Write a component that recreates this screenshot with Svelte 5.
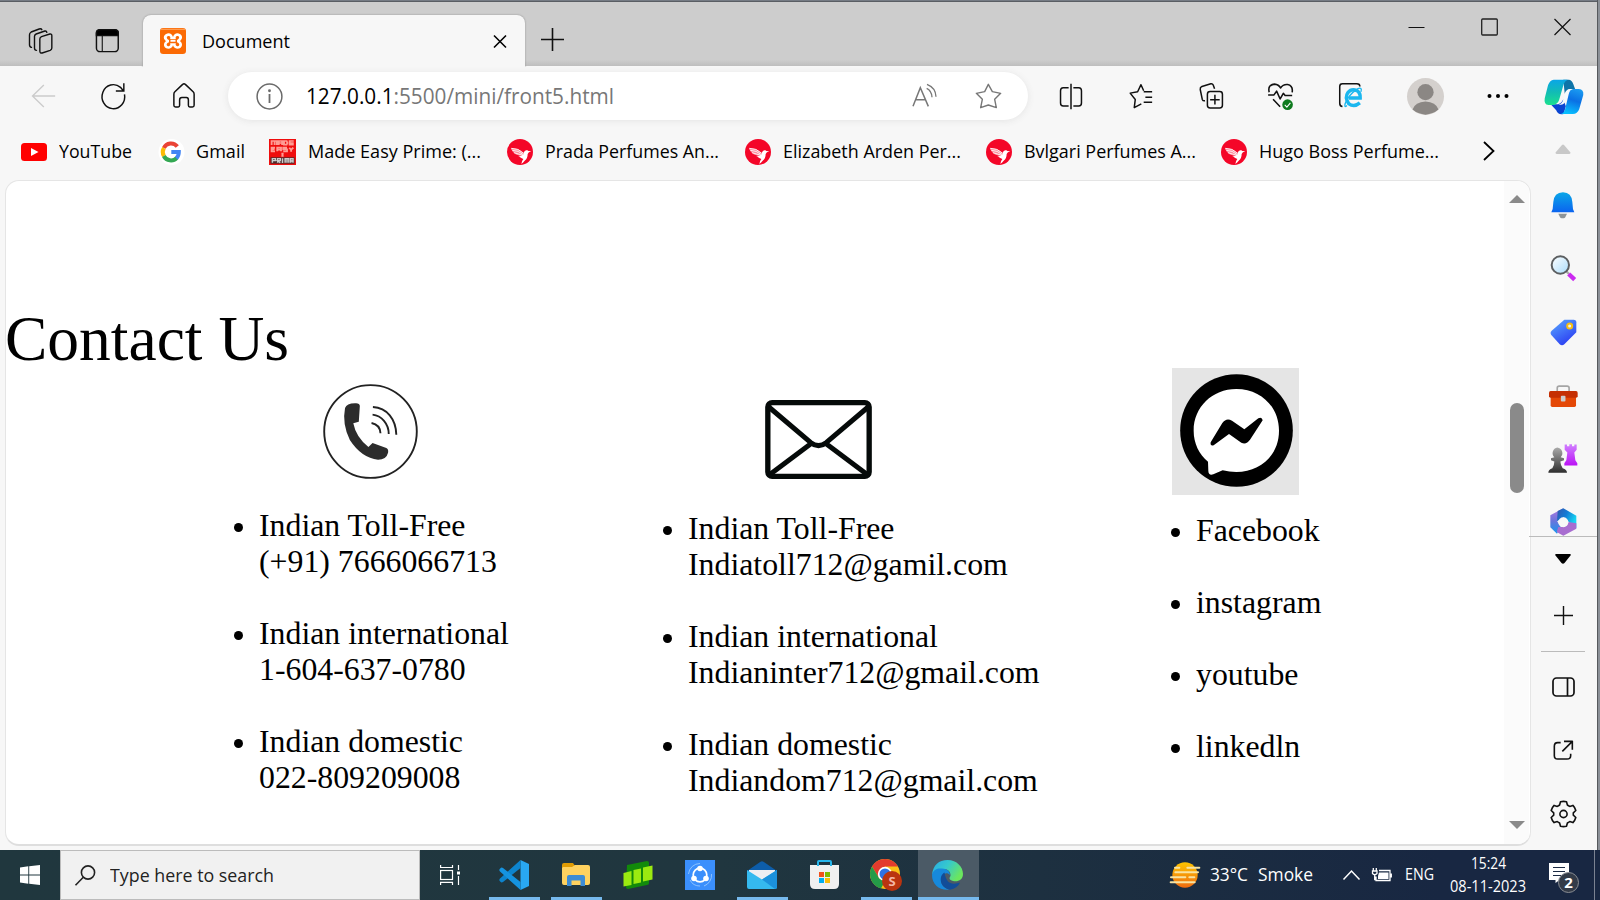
<script>
  const bookmarks = [
    { kind: 'youtube', label: 'YouTube', w: 73 },
    { kind: 'google', label: 'Gmail', w: 49 },
    { kind: 'made', label: 'Made Easy Prime: (...', w: 173 },
    { kind: 'bird', label: 'Prada Perfumes An...', w: 174 },
    { kind: 'bird', label: 'Elizabeth Arden Per...', w: 178 },
    { kind: 'bird', label: 'Bvlgari Perfumes A...', w: 172 },
    { kind: 'bird', label: 'Hugo Boss Perfume...', w: 180 }
  ];

  const phones = [
    ['Indian Toll-Free', '(+91) 7666066713'],
    ['Indian international', '1-604-637-0780'],
    ['Indian domestic', '022-809209008']
  ];
  const mails = [
    ['Indian Toll-Free', 'Indiatoll712@gamil.com'],
    ['Indian international', 'Indianinter712@gmail.com'],
    ['Indian domestic', 'Indiandom712@gmail.com']
  ];
  const socials = ['Facebook', 'instagram', 'youtube', 'linkedln'];

  // Condenses or widens a label so that it fills exactly the given width.
  function fit(node, width) {
    const natural = node.getBoundingClientRect().width;
    node.style.width = width + 'px';
    node.style.transform = `scaleX(${width / natural})`;
  }
</script>

{#snippet bird()}
  <svg width="26" height="26" viewBox="0 0 78 78">
    <circle cx="39" cy="39" r="39" fill="#f40628" />
    <path d="M12 28Q32 26 50 41L51 49Q42 52 34 49Q26 47 22 43Q16 39 15 34Q12 32 12 28Z" fill="#fb8b9c" />
    <path d="M13 28Q34 27 50 43M16 34Q34 34 49 47M21 41Q34 45 48 49" stroke="#fff" stroke-width="2.500" fill="none" />
    <path d="M50 46Q50 36 58 34Q63 33 64 36L73 37Q64 39 62 45Q62 59 53 65Q49 70 43 75Q44 66 49 60Q44 58 34 51Q44 53 50 46Z" fill="#fff" />
  </svg>
{/snippet}

<div class="desktop">
  <div class="window">
    <header class="titlebar">
      <svg class="spaces" width="29" height="28" viewBox="70 80 80 84" fill="none" stroke="#111" stroke-width="4.200" stroke-linejoin="round" stroke-linecap="round">
        <path d="M113 109L138 101Q144 100 144 106V143Q144 148 139 150L115 158Q108 159 108 152V116Q108 111 113 109Z" />
        <path d="M98 150Q92 150 92 143V108Q92 103 97 101L123 92Q128 91 129 96" />
        <path d="M83 141Q77 140 77 133V103Q77 98 82 95L106 86Q112 84 114 88" />
      </svg>
      <svg class="tabmenu" width="24.7" height="25.3" viewBox="260 84 68 76" preserveAspectRatio="none" fill="none" stroke="#111" stroke-width="4">
        <rect x="264" y="89" width="60" height="66" rx="10" />
        <path d="M264 107V98Q264 89 274 89H314Q324 89 324 98V107Z" fill="#000" />
        <path d="M280 108V155" stroke-width="3" />
      </svg>
      <div class="tab">
        <svg width="26" height="26" viewBox="0 0 72 78" preserveAspectRatio="none">
          <rect width="72" height="78" rx="9" fill="#fb6a04" />
          <rect x="2" y="2" width="68" height="4" rx="2" fill="#ff9c4f" />
          <path d="M17 18C25 13 34 18 36 27C38 18 47 13 55 18C65 24 61 35 55 39C62 44 64 55 55 61C47 65 38 60 36 52C34 60 25 65 17 61C8 55 10 44 17 39C10 35 7 24 17 18Z" fill="#fff" />
          <path d="M21 25C28 22 30 29 28 33H44C42 29 44 22 51 25C56 29 50 35 47 36V43C51 44 57 50 51 54C44 57 42 50 44 46H28C30 50 28 57 21 54C15 50 21 44 25 43V36C21 35 16 29 21 25Z" fill="#fb6a04" />
          <path d="M29 38H43" stroke="#fff" stroke-width="6" />
        </svg>
        <span class="label" use:fit={88}>Document</span>
        <svg class="tabclose" width="14" height="15" viewBox="0 0 14 15" stroke="#000" stroke-width="1.6"><path d="M1 1.5L13 13.5M13 1.5L1 13.5" /></svg>
      </div>
      <svg class="newtab" width="23" height="23" viewBox="0 0 23 23" stroke="#111" stroke-width="1.6"><path d="M0 11.5H23M11.5 0V23" /></svg>
      <div class="controls">
        <svg width="17" height="18" viewBox="0 0 17 18" stroke="#111"><path d="M.5 9.5H16.5" /></svg>
        <svg width="17" height="18" viewBox="0 0 17 18" stroke="#222" fill="none"><rect x=".7" y="1" width="15.6" height="16" rx="1" stroke-width="1.3" /></svg>
        <svg width="17" height="18" viewBox="0 0 17 18" stroke="#111" stroke-width="1.2"><path d="M.5 1L16.5 17M16.5 1L.5 17" /></svg>
      </div>
    </header>

    <div class="toolbar">
      <svg width="27" height="26" viewBox="82 248 74 78" fill="none" stroke="#cbcbcb" stroke-width="4"><path d="M154 287H86M120 254L86 287L120 320" /></svg>
      <svg width="29" height="28" viewBox="272 246 80 84" fill="none" stroke="#111" stroke-width="4.400"><path d="M345 283A34 36 0 1 1 333 262L342 273M343 250V273H319" /></svg>
      <svg class="home" width="26" height="27" viewBox="468 247 72 80" fill="none" stroke="#111" stroke-width="4.400" stroke-linejoin="round"><path d="M474 316V283Q474 279 477 276L500 254Q504 250 508 254L531 276Q534 279 534 283V316Q534 321 529 321H521Q517 321 517 316V300Q517 293 511 293H498Q491 293 491 300V316Q491 321 487 321H479Q474 321 474 316Z" /></svg>
      <div class="address">
        <svg width="27" height="27" viewBox="0 0 27 27" fill="none" stroke="#6b6b6b" stroke-width="1.5"><circle cx="13.5" cy="13.5" r="12.4" /><path d="M13.5 11V20" stroke-width="1.8" /><circle cx="13.5" cy="7.7" r=".7" /></svg>
        <span class="url" use:fit={308}><b>127.0.0.1</b>:5500/mini/front5.html</span>
        <svg class="read" width="26" height="24" viewBox="1059 66 78 72" fill="none" stroke="#777" stroke-width="4.500"><path d="M1062 136L1084 80L1108 136M1070 116H1099" /><path d="M1104 70Q1130 80 1131 107M1103 82Q1118 89 1119 109" stroke-width="4" /></svg>
        <svg width="27" height="26" viewBox="1245 68 81 78" fill="none" stroke="#777" stroke-width="4.200" stroke-linejoin="round"><path d="M1285 72L1297 94L1322 99L1304 117L1309 142L1285 134L1262 142L1267 117L1249 99L1274 94Z" /></svg>
      </div>
      <span></span>
      <svg width="26" height="27" viewBox="103 248 72 80" fill="none" stroke="#111" stroke-width="4.400"><path d="M139 250V326M132 262H116Q108 262 108 271V307Q108 316 116 316H132M146 262H162Q170 262 170 271V307Q170 316 162 316H146" /></svg>
      <svg width="27" height="27" viewBox="293 248 75 80" fill="none" stroke="#111" stroke-width="4.400" stroke-linejoin="round"><path d="M337 271L329 253L319 274L297 278L312 297L309 321L330 310M337 274H362M342 290H362M337 305H362" /></svg>
      <svg width="27" height="28" viewBox="482 247 74 82" fill="none" stroke="#111" stroke-width="4.400" stroke-linejoin="round"><path d="M528 267L524 256Q522 251 517 252L491 260Q485 263 486 269L492 298Q494 303 500 302" /><rect x="507" y="275" width="44" height="48" rx="8" /><path d="M529 284V313M515 299H543" /></svg>
      <svg width="27" height="29" viewBox="670 250 74 82" fill="none" stroke="#111" stroke-width="4.400" stroke-linejoin="round"><path d="M675 279Q670 258 690 256Q702 257 707 267Q714 256 727 257Q743 260 740 279M672 287H688L696 276L706 298L715 282L720 288H740M686 299L706 320" /><circle cx="727" cy="314" r="15" fill="#0f7b1f" stroke="none" /><path d="M719 315L725 321L735 309" stroke="#fff" stroke-width="3" /></svg>
      <svg width="28" height="28" viewBox="859 248 76 82" fill="none" stroke="#111" stroke-width="4.400"><path d="M872 320Q864 319 864 310V261Q864 253 872 253H914Q923 253 923 261" /><path d="M923 309Q906 323 890 311Q878 293 888 279Q898 267 914 273Q925 280 924 295H891" stroke="#1bb7ef" stroke-width="10" /><path d="M885 317Q876 325 880 311Q889 286 916 268Q931 261 926 277" stroke="#1bb7ef" stroke-width="4" /></svg>
      <svg width="37" height="37" viewBox="0 0 100 110" preserveAspectRatio="none"><ellipse cx="50" cy="55" rx="50" ry="55" fill="#d4d0cd" /><ellipse cx="50" cy="42" rx="22" ry="24" fill="#8b8784" /><path d="M15 94Q22 71 50 70Q78 71 85 94Q70 108 50 109Q30 108 15 94Z" fill="#8b8784" /></svg>
      <svg width="22" height="6" viewBox="0 0 22 6"><circle cx="2.5" cy="3" r="2" /><circle cx="11" cy="3" r="2" /><circle cx="19.5" cy="3" r="2" /></svg>
      <svg class="copilot" width="40" height="36" viewBox="1418 236 108 108" preserveAspectRatio="none">
        <defs>
          <linearGradient id="cpA" x1="0" y1="0" x2="0" y2="1"><stop offset="0" stop-color="#0aa5e8" /><stop offset=".5" stop-color="#12bcb4" /><stop offset="1" stop-color="#1be08f" /></linearGradient>
          <linearGradient id="cpB" x1=".7" y1="0" x2=".4" y2="1"><stop offset="0" stop-color="#1a9af0" /><stop offset=".45" stop-color="#0a70e4" /><stop offset="1" stop-color="#08c0ff" /></linearGradient>
        </defs>
        <path d="M1470 238H1486Q1494 240 1497 251L1502 266H1486Q1478 268 1474 280Z" fill="#0e74a8" />
        <path d="M1436 312H1456Q1466 309 1470 297L1477 318L1471 341Q1456 345 1451 330Z" fill="#0a45d2" />
        <path d="M1444 238H1482Q1474 241 1471 252L1459 298Q1455 313 1440 314H1430Q1417 313 1420 294L1429 254Q1434 239 1444 238Z" fill="url(#cpA)" />
        <path d="M1489 266H1512Q1526 267 1524 284L1513 327Q1508 341 1496 341H1463Q1472 339 1475 327L1485 280Q1488 267 1497 266Z" fill="url(#cpB)" />
        <path d="M1489 266Q1479 268 1475 280L1470 298Q1467 310 1457 313H1463Q1472 313 1477 302L1484 278Q1487 268 1494 266Z" fill="#f4fafd" />
      </svg>
    </div>

    <div class="body">
      <div class="main">
        <nav class="bookmarks">
          {#each bookmarks as b}
            <a class="bookmark {b.kind}">
              {#if b.kind === 'youtube'}
                <svg width="26" height="18" viewBox="0 0 26 18"><rect width="26" height="18" rx="3.5" fill="#f00" /><path d="M10 5L17.5 9L10 13Z" fill="#fff" /></svg>
              {:else if b.kind === 'google'}
                <svg width="26" height="26" viewBox="0 0 26 26"><circle cx="12.500" cy="13" r="13" fill="#fff" /><g fill="none" stroke-width="4"><path d="M4.800 9A8 8 0 0 1 18.300 7.500" stroke="#ea4335" /><path d="M4.900 17A8 8 0 0 1 4.900 9" stroke="#fbbc05" /><path d="M17.800 18.800A8 8 0 0 1 4.800 17" stroke="#34a853" /><path d="M12.300 13H19.800Q19.800 17 17.300 19.200" stroke="#4285f4" /></g></svg>
              {:else if b.kind === 'made'}
                <svg width="27" height="26" viewBox="0 0 72 78" preserveAspectRatio="none"><rect width="72" height="78" fill="#ef0d0d" /><g fill="none" stroke="#ff9c94" stroke-width="5"><path d="M7 18V6H15V18M15 6H21V18M26 18V6H35V18M26 12H35M40 6V17H47L49 12L47 6ZM66 6H55V17H66M55 12H66" /><path d="M16 26H7V37H16M7 31H15M22 37V26H32V37M22 32H32M48 26H38V31H48V37H38M54 26L59 32L65 26M59 32V38M33 44H39M36 44V51M33 51H39" /></g><rect x="4" y="55" width="64" height="19" fill="#4a2a2a" /><path d="M9 71V59H17V65H9M23 71V59H30V65H23L30 71M36 58V72M43 71V59H48V71M48 59H53V71M58 71V59H64V71M58 66H64" stroke="#ccc" stroke-width="4" fill="none" /></svg>
              {:else}
                {@render bird()}
              {/if}
              <span class="label" use:fit={b.w}>{b.label}</span>
            </a>
          {/each}
          <svg class="more" width="12" height="20" viewBox="0 0 12 20" fill="none" stroke="#000" stroke-width="1.800"><path d="M0 1L9.500 10L0 19" /></svg>
        </nav>

        <div class="page">
          <div class="content">
            <h1>Contact Us</h1>
            <div class="columns">
              <section class="call">
                <svg width="95" height="95" viewBox="938 282 276 285" preserveAspectRatio="none" fill="none" stroke="#222" stroke-width="5.500">
                  <ellipse cx="1076" cy="424.500" rx="134.500" ry="139" />
                  <path d="M1002 354Q1007 339 1034 340Q1045 341 1045 348L1042 395L1026 400Q1034 442 1070 471L1082 459L1122 474Q1129 478 1127 488Q1122 509 1098 509Q1050 504 1016 450Q993 402 1002 354Z" fill="#2c2c2c" stroke="none" />
                  <path d="M1083 351C1124 353 1150 388 1151 434M1082 374C1108 377 1129 401 1129 432M1079 399Q1104 404 1105 430" />
                </svg>
                <ul>
                  {#each phones as p}<li>{p[0]}<br />{p[1]}</li>{/each}
                </ul>
              </section>
              <section class="mail">
                <svg width="107" height="79" viewBox="374.500 89 321 237" fill="none" stroke="#050a09" stroke-width="16" stroke-linejoin="round">
                  <rect x="383" y="97" width="304" height="221" rx="13" />
                  <path d="M386 110L512 217Q535 235 558 217L684 110M388 313L514 219M682 313L556 219" stroke-width="15" />
                </svg>
                <ul>
                  {#each mails as m}<li>{m[0]}<br />{m[1]}</li>{/each}
                </ul>
              </section>
              <section class="social">
                <svg width="127" height="127" viewBox="96 54 381 381">
                  <path d="M96 54H477V435H96Z" fill="#e5e5e5" />
                  <circle cx="289.500" cy="241.500" r="169" />
                  <path d="M289 117C364 117 417 172 417 242C417 316 360 366 289 366Q268 366 248 361L220 373Q206 378 205 363L204 335C177 312 161 280 161 242C161 171 217 117 289 117Z" fill="#fff" />
                  <path d="M212 277L247 219Q259 202 276 212L313 238L355 205Q366 199 368 211L330 269Q319 285 304 278L267 252L221 286Q210 289 212 277Z" />
                </svg>
                <ul>
                  {#each socials as s}<li>{s}</li>{/each}
                </ul>
              </section>
            </div>
          </div>
          <div class="scroll">
            <svg width="16" height="8" viewBox="0 0 16 8"><path d="M0 8L8 0L16 8Z" fill="#8a8a8a" /></svg>
            <div class="thumb"></div>
            <svg class="down" width="16" height="8" viewBox="0 0 16 8"><path d="M0 0L8 8L16 0Z" fill="#8a8a8a" /></svg>
          </div>
        </div>
      </div>

      <aside class="sidebar">
        <svg width="16" height="10" viewBox="0 0 16 10"><path d="M.5 8.500L7 1Q8 0 9 1L15.500 8.500Q15.500 10 14 10H2Q.5 10 .5 8.500Z" fill="#c8c8c8" /></svg>
        <svg width="24" height="27" viewBox="187 190 72 81"><defs><linearGradient id="bell" x1="0" y1="0" x2="0" y2="1"><stop offset="0" stop-color="#0aa7e8" /><stop offset="1" stop-color="#0b63ef" /></linearGradient></defs><path d="M209 255H235L229 267Q222 271 215 267Z" fill="#8d9499" /><path d="M194 220Q196 192 223 191Q249 192 251 220L253 241L257 251H188L192 241Z" fill="url(#bell)" /></svg>
        <svg class="lens" width="27" height="27" viewBox="178 376 81 81"><defs><linearGradient id="glass" x1="0" y1="0" x2="1" y2="1"><stop offset="0" stop-color="#fff" /><stop offset="1" stop-color="#a9dcfb" /></linearGradient></defs><path d="M227 425L235 433" stroke="#aaa" stroke-width="7" /><path d="M234 433L252 450" stroke="#cb2af0" stroke-width="13" /><circle cx="209" cy="406" r="26" fill="url(#glass)" stroke="#5c5f61" stroke-width="6" /></svg>
        <svg width="27" height="27" viewBox="182 569 81 81"><defs><linearGradient id="tag" x1="0" y1="0" x2=".6" y2="1"><stop offset="0" stop-color="#5aabff" /><stop offset="1" stop-color="#2c3ef2" /></linearGradient></defs><path d="M225 571H253Q261 571 261 579V609L225 645Q218 651 211 645L186 617Q181 610 187 604Z" fill="url(#tag)" /><circle cx="241" cy="590" r="7.500" fill="#e8f0ff" stroke="#f6bd13" stroke-width="6" /></svg>
        <svg width="29" height="24" viewBox="179 766 88 70"><path d="M204 788V777Q204 771 210 771H234Q240 771 240 777V788" fill="none" stroke="#a5a5a5" stroke-width="5" /><rect x="184" y="798" width="77" height="36" rx="5" fill="#e44807" /><path d="M184 786H261Q266 786 266 792V802Q266 806 261 806H184Q179 806 179 802V792Q179 786 184 786Z" fill="#c52f03" /><rect x="215" y="800" width="14" height="18" rx="3" fill="#ccc" /></svg>
        <svg width="30" height="31" viewBox="178 943 90 92"><defs><linearGradient id="rook" x1="0" y1="0" x2="0" y2="1"><stop offset="0" stop-color="#d080ff" /><stop offset="1" stop-color="#bb12f5" /></linearGradient><linearGradient id="pawn" x1="0" y1="0" x2="0" y2="1"><stop offset="0" stop-color="#aaa" /><stop offset="1" stop-color="#2d2d2d" /></linearGradient></defs><path d="M228 947H235V952H242V946H250V952H257V947H264V963L257 971L260 994L266 1003V1010H227V1003L233 994L236 971L228 963Z" fill="url(#rook)" /><path d="M206 956A17 17 0 0 1 216 985L226 988V994L215 998Q216 1010 222 1018Q235 1021 235 1032H179Q179 1021 191 1018Q197 1010 197 998L187 994V988L197 985A17 17 0 0 1 206 956Z" fill="url(#pawn)" /></svg>
        <svg class="m365" width="27" height="28" viewBox="182 1138 81 84"><defs><linearGradient id="m1" x1="0" y1="0" x2="1" y2=".5"><stop offset="0" stop-color="#3157ae" /><stop offset=".5" stop-color="#147bd5" /><stop offset="1" stop-color="#15d8f3" /></linearGradient><linearGradient id="m2" x1="0" y1="0" x2="0" y2="1"><stop offset="0" stop-color="#b07be0" /><stop offset=".5" stop-color="#6a74dc" /><stop offset="1" stop-color="#1597ee" /></linearGradient></defs><path d="M222 1139L183 1160V1196L203 1215L214 1194L203 1177Z" fill="url(#m2)" /><path d="M222 1139L261 1161V1198L235 1177L223 1166L203 1178L205 1147Z" fill="url(#m1)" /><path d="M261 1184V1200L222 1221L202 1210L207 1195L225 1195L238 1180Z" fill="#a86dd0" /><circle cx="222" cy="1181" r="15" fill="#f7f7f7" /></svg>
        <div class="rule wide"></div>
        <svg width="16" height="10" viewBox="0 0 16 10"><path d="M1 0H15Q16.500 0 15.500 1.500L9.500 9Q8 10.500 6.500 9L.5 1.500Q-.5 0 1 0Z" /></svg>
        <svg width="19" height="19" viewBox="0 0 19 19" stroke="#111" stroke-width="1.4"><path d="M0 9.500H19M9.500 0V19" /></svg>
        <div class="rule"></div>
        <svg class="panel" width="23" height="20" viewBox="0 0 23 20" fill="none" stroke="#111" stroke-width="1.7"><rect x="1" y="1" width="21" height="18" rx="3.500" /><path d="M15.500 1V19" /></svg>
        <svg class="launch" width="21" height="21" viewBox="191 725 63 63" fill="none" stroke="#111" stroke-width="4.800" stroke-linejoin="round"><path d="M214 733H205Q195 733 195 744V772Q195 782 205 782H233Q244 782 244 772V766M219 759L249 729M224 729H249V754" /></svg>
        <svg width="27" height="28" viewBox="-13.500 -14 27 28" fill="none" stroke="#111" stroke-width="1.600" stroke-linejoin="round"><path d="M-3 -12.300Q0 -13 3 -12.300L3.900 -9Q5 -8.300 6.200 -7.600L9.400 -8.600Q11.500 -6.500 12.300 -3.500L9.800 -1.200V1.200L12.300 3.500Q11.500 6.500 9.400 8.600L6.200 7.600Q5 8.300 3.900 9L3 12.300Q0 13 -3 12.300L-3.900 9Q-5 8.300 -6.200 7.600L-9.400 8.600Q-11.500 6.500 -12.300 3.500L-9.800 1.200V-1.200L-12.300 -3.500Q-11.500 -6.500 -9.400 -8.600L-6.200 -7.600Q-5 -8.300 -3.900 -9Z" /><circle r="3.600" /></svg>
      </aside>
    </div>
  </div>

  <footer class="taskbar">
    <div class="start">
      <svg width="20" height="20" viewBox="0 0 20 20" fill="#fff"><path d="M0 2.500L8.300 1.300V9.500H0ZM9.200 1.200L20 0V9.500H9.200ZM0 10.400H8.300V18.700L0 17.500ZM9.200 10.400H20V20L9.200 18.800Z" /></svg>
    </div>
    <div class="search">
      <svg width="21" height="21" viewBox="0 0 21 21" fill="none" stroke="#222" stroke-width="1.600"><circle cx="13" cy="7.500" r="6.600" /><path d="M8.300 12.300L.5 20.200" /></svg>
      <span class="label" use:fit={164}>Type here to search</span>
    </div>
    <div class="apps">
      <div class="app view">
        <svg width="21" height="20" viewBox="0 0 21 20" fill="none" stroke="#fff" stroke-width="1.200"><path d="M.6 0V2.500H12.500V0M.6 20V17.300H12.500V20M18.500 0V5M18.500 11V20" /><rect x=".6" y="5.500" width="11.900" height="9" /><path d="M17 8H20" stroke-width="3" /></svg>
      </div>
      <div class="app open">
        <svg width="30" height="30" viewBox="0 0 30 30"><path d="M21.500 0L30 4V26L21.500 30Z" fill="#29a8f2" /><path d="M21.500 0V8L4 22Q2.500 23 1.200 21.500Q-.5 20 1 18.500Z" fill="#0d84cd" /><path d="M21.500 30V22L4 8Q2.500 7 1.200 8.500Q-.5 10 1 11.500Z" fill="#1593e0" /></svg>
      </div>
      <div class="app open">
        <svg width="28" height="24" viewBox="0 0 28 24"><path d="M0 2Q0 0 2 0H11L13.500 3.500V8H0Z" fill="#e09c04" /><path d="M1 4H10L13 2H26Q28 2 28 4V20Q28 22 26 22H2Q0 22 0 20V5Z" fill="#ffd25f" /><path d="M5 23V14Q5 12 7 12H21Q23 12 23 14V23H18.500V17.500H9.500V23Z" fill="#3d8cd4" /></svg>
      </div>
      <div class="app">
        <svg width="30" height="30" viewBox="0 0 30 30"><path d="M4 5L24 1Q26 1 26 3V23Q26 25 24 25L5 29Q3 29 3 27Z" fill="#128a0b" /><path d="M.5 13L8.500 11V25L.5 26.500ZM10.500 10L18 8.500V22.500L10.500 24ZM20 7.500L29.500 5.500V19.500L20 21.500Z" fill="#9bea10" /></svg>
      </div>
      <div class="app">
        <svg width="30" height="30" viewBox="0 0 30 30" fill="none" stroke="#fff"><rect width="30" height="30" fill="#3b8ffc" stroke="none" /><circle cx="15" cy="15" r="6.800" stroke-width="1.700" /><path d="M3.500 14A11.500 11.500 0 0 1 15 3.500M26.500 14A11.500 11.500 0 0 1 19 26M5 20A11 11 0 0 0 15 26" stroke="#8dc2ff" /><g fill="#fff" stroke="none"><circle cx="15" cy="8.500" r="2.800" /><circle cx="9" cy="18.500" r="2.800" /><circle cx="21" cy="18.500" r="2.800" /></g></svg>
      </div>
      <div class="app open">
        <svg width="30" height="28" viewBox="0 0 30 28"><path d="M0 10L13.500 .7Q15 -.3 16.500 .7L30 10V14H0Z" fill="#0d5da9" /><path d="M2 9H28V20H2Z" fill="#eeeef2" /><path d="M0 9L15 18.500L30 9V26Q30 28 28 28H2Q0 28 0 26Z" fill="#35b9ef" /><path d="M30 9V26Q30 28 28 28L15 18.500Z" fill="#1c91dc" /></svg>
      </div>
      <div class="app">
        <svg width="29" height="30" viewBox="0 0 29 30"><path d="M8 7V2Q8 1 9 1H20Q21 1 21 2V7" fill="none" stroke="#27b6ec" stroke-width="2" /><path d="M0 5H29V24Q29 29 24 29H5Q0 29 0 24Z" fill="#f0f0f0" /><path d="M8 4V6M21 4V6" stroke="#27b6ec" stroke-width="2" /><path d="M9 12H14V17H9Z" fill="#f1511b" /><path d="M15 12H20V17H15Z" fill="#80bb01" /><path d="M9 18H14V23H9Z" fill="#00adef" /><path d="M15 18H20V23H15Z" fill="#fbbc09" /></svg>
      </div>
      <div class="app open">
        <svg width="32" height="32" viewBox="0 0 32 32"><circle cx="15" cy="15" r="15" fill="#fbc116" /><path d="M2 7.500A15 15 0 0 1 28 7.500H15L9 19Z" fill="#e33b2e" /><path d="M2 7.500L9 19L15 22L11 29.500A15 15 0 0 1 2 7.500Z" fill="#249b48" /><circle cx="15" cy="15" r="7.200" fill="#fff" /><circle cx="15" cy="15" r="5.500" fill="#2f72e4" /><circle cx="22" cy="22" r="10" fill="#ba3410" /><text x="22" y="26.500" text-anchor="middle" class="initial">S</text></svg>
      </div>
      <div class="app open active">
        <svg width="31" height="30" viewBox="0 0 31 30"><defs><linearGradient id="eg" x1="0" y1="0" x2="1" y2=".5"><stop offset="0" stop-color="#27a9e8" /><stop offset=".5" stop-color="#36c9cc" /><stop offset="1" stop-color="#6be65e" /></linearGradient></defs><path d="M0 15C1 5 7 0 15.500 0C25 0 31 7 31 14C31 20 26 22 21 21C17 20 17 18 18.500 16C19 12 16 9 12 9C6 9 1 12 0 15Z" fill="url(#eg)" /><path d="M0 15C1 9 6 8 10 8.500C16 9 18 12 18 15C14 11 9 15 9 20C9 25 13 29 18 29.500C8 31 0 25 0 15Z" fill="#1689dc" /><path d="M12.500 12.500C6 16 8 28 18 29.700C22 29 26 27 28 22.500C23 24.500 17 24 15 20C13 17 13 14 12.500 12.500Z" fill="#124d98" /></svg>
      </div>
    </div>
    <div class="tray">
      <svg class="sun" width="30" height="26" viewBox="93 66 90 78"><defs><linearGradient id="sun" x1="0" y1="0" x2="0" y2="1"><stop offset="0" stop-color="#ffc400" /><stop offset="1" stop-color="#ee6b10" /></linearGradient></defs><circle cx="138" cy="105" r="38" fill="url(#sun)" /><path d="M108 83H121M145 83H181M109 97H177M96 112H139M151 112H166M95 127H167" stroke="#f8e3a2" stroke-width="6" stroke-linecap="round" /></svg>
      <span class="label temp" use:fit={38}>33°C</span>
      <span class="label smoke" use:fit={55}>Smoke</span>
      <svg class="caret" width="17" height="10" viewBox="0 0 17 10" fill="none" stroke="#fff" stroke-width="1.500"><path d="M.5 9.500L8.500 1L16.500 9.500" /></svg>
      <svg class="battery" width="20" height="14" viewBox="0 0 20 14" fill="none" stroke="#fff" stroke-width="1.300"><path d="M7 2.500H18V12.500H4V8.500M19.300 5.500V9.500M1.300 0V3M4.300 0V3M.5 3H5V5.500Q2.700 8 .5 5.500ZM2.700 6V11.500H4" /><path d="M7 4.500H16.500V11H6V8Z" fill="#fff" stroke="none" /></svg>
      <span class="label eng" use:fit={29}>ENG</span>
      <div class="clock">
        <span class="label" use:fit={35}>15:24</span>
        <span class="label" use:fit={76}>08-11-2023</span>
      </div>
      <svg class="notes" width="31" height="30" viewBox="0 0 31 30"><path d="M0 0H20V17H10.500L6.500 20V17H0Z" fill="#fff" /><path d="M4 4.500H16M4 8.500H16M4 12.500H12" stroke="#1b2a44" stroke-width="1.200" /><circle cx="19.500" cy="19.500" r="10" fill="#333b48" stroke="#8a8d93" /><text x="19.500" y="25" text-anchor="middle" class="count">2</text></svg>
      <div class="peek"></div>
    </div>
  </footer>
</div>

<style>
  :global(body) { margin: 0; overflow: hidden; }
  .desktop { width: 1600px; height: 900px; display: flex; flex-direction: column; background: #8b9097; font-family: "Open Sans", "Noto Sans", sans-serif; font-size: 18px; color: #000; overflow: hidden; }
  svg { display: block; flex: none; overflow: visible; }
  .window { box-sizing: border-box; width: 1598px; height: 850px; padding-top: 1px; display: flex; flex-direction: column; background: linear-gradient(#757b84 0 1px, #f7f7f7 1px); border-right: 1px solid #56595d; }
  .label, .url { display: block; flex: none; white-space: pre; transform-origin: 0 50%; margin-bottom: 2px; }

  .titlebar { height: 65px; box-sizing: border-box; border-top: 1px solid #5a5e64; display: flex; align-items: flex-start; background: linear-gradient(#cdcdcd 58px, #bebebe 64px); }
  .spaces { margin: 25px 0 0 26px; }
  .tabmenu { margin: 26px 0 0 39.500px; }
  .tab { box-sizing: border-box; margin: 13px 0 0 23.500px; width: 382px; height: 52px; display: flex; align-items: center; padding: 0 18px 0 17px; background: #f7f7f7; border-radius: 8px 8px 0 0; box-shadow: 0 0 2px #888; clip-path: inset(-3px -3px 0 -3px); }
  .tab .label { margin-left: 16px; font-size: 18.5px; }
  .tabclose { margin-left: auto; }
  .newtab { margin: 26px 0 0 16px; }
  .controls { display: flex; gap: 56px; margin: 16px 0 0 844px; }

  .toolbar { height: 60px; display: grid; grid-template-columns: 87px 52px 89px 800px 8px 70px 70px 70px 69px 72px 76px 69px 64px; place-items: center; }
  .home { margin-bottom: 1px; }
  .copilot { margin-top: 1px; }
  .address { box-sizing: border-box; width: 800px; height: 48px; display: flex; align-items: center; border-radius: 24px; background: #fff; padding: 0 26px 0 28px; box-shadow: 0 1px 7px #e4e4e4; }
  .url { margin-left: 23px; font-size: 22px; color: #777; }
  .url b { font-weight: 400; color: #000; }
  .read { margin: 0 37px 3px auto; }

  .body { height: 724px; display: flex; }
  .main { width: 1531px; display: flex; flex-direction: column; }
  .bookmarks { height: 51px; padding: 0 0 3px 21px; display: grid; grid-template-columns: 138px 110px 238px 238px 241px 235px 263px 12px; align-items: center; }
  .bookmark { display: flex; align-items: center; gap: 12px; }
  .google .label { margin-left: -1px; }
  .bookmark .label { font-size: 18.3px; }
  .more { margin-bottom: 2px; }

  .page { box-sizing: border-box; margin-left: 5px; width: 1526px; height: 666px; border: 1px solid #e5e5e5; border-bottom: 2px solid #dedede; border-radius: 14px; background: #fff; display: flex; overflow: hidden; }
  .content { width: 1498px; font-family: "Liberation Serif", serif; }
  h1 { margin: 0 0 -1px -1px; padding-top: 128px; font-size: 63.500px; line-height: 60px; font-weight: 400; }
  .columns { display: grid; grid-template-columns: 429px 508px 300px; padding-left: 253px; }
  .call svg { margin: 16px 0 29px 63.500px; }
  .mail svg { margin: 32px 0 32px 77px; }
  .social svg { margin: 0 0 18px -24px; }
  ul { margin: 0; padding: 0; list-style: disc; font-size: 31.800px; line-height: 36px; white-space: nowrap; }
  li { margin-bottom: 36px; }
  .scroll { width: 25px; display: flex; flex-direction: column; align-items: center; background: #fbfbfb; box-sizing: border-box; padding: 14px 0 15px; }
  .thumb { width: 14px; height: 90px; margin-top: 200px; border-radius: 7px; background: #8a8a8a; }
  .down { margin-top: auto; }

  .sidebar { width: 66px; margin-left: -1px; display: grid; grid-template-columns: 66px; grid-template-rows: 45px 69px 57px 71px 56px 69px 43px 1px 44px 68px 5px 66px 60px 68px; place-items: center; }
  .m365 { align-self: end; }
  .rule { width: 44px; height: 1px; background: #bbb; }
  .wide { width: 68px; }

  .taskbar { height: 50px; width: 1600px; display: flex; background: linear-gradient(90deg, #20373e 0, #20363f 45%, #1d3040 65%, #182742 90%); color: #fff; }
  .start { width: 60px; display: flex; align-items: center; justify-content: center; }
  .search { box-sizing: border-box; width: 360px; border: 1px solid #bcbcbc; background: #f1f1f1; display: flex; align-items: center; padding-left: 14px; color: #222; }
  .search .label { margin-left: 14px; font-size: 18.500px; }
  .apps { display: flex; }
  .app { box-sizing: border-box; width: 62px; height: 50px; display: flex; align-items: center; justify-content: center; }
  .app svg { margin-right: 1px; }
  .view { width: 63.500px; padding-right: 2px; }
  .open { background: linear-gradient(#76b9ed, #76b9ed) 50% 100% / 51px 3px no-repeat; }
  .active { width: 61px; background: linear-gradient(#76b9ed, #76b9ed) 50% 100% / 61px 3px no-repeat, #4b5a66; }
  .initial { font: 700 13px "Open Sans", sans-serif; fill: #f3b6a6; }
  .tray { display: flex; align-items: center; margin-left: auto; padding-right: 5px; font-size: 18px; }
  .sun { margin-right: 1px; }
  .temp { margin-left: 9px; }
  .smoke { margin-left: 10px; }
  .caret { margin-left: 30px; }
  .battery { margin-left: 12px; }
  .eng { margin-left: 13px; font-size: 15.500px; }
  .clock { width: 76px; margin-left: 16px; display: flex; flex-direction: column; align-items: center; font-size: 15.500px; line-height: 23px; }
  .clock .label { margin: 0; }
  .notes { margin: 5px 0 0 23px; }
  .count { font: 700 15px "Open Sans", sans-serif; fill: #fff; }
  .peek { width: 1px; height: 50px; margin-left: 14px; background: #7a8291; }
</style>
